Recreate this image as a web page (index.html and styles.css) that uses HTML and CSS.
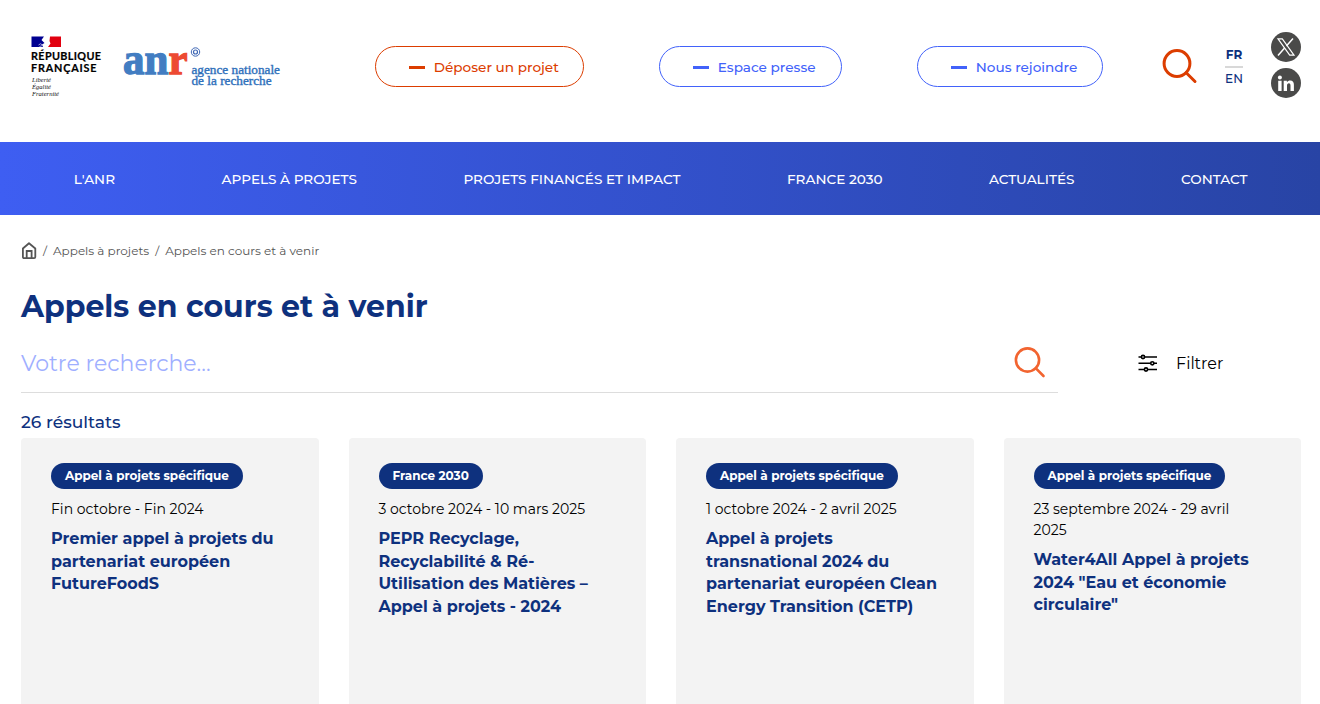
FILE: index.html
```html
<!DOCTYPE html>
<html lang="fr">
<head>
<meta charset="utf-8">
<title>Appels en cours et à venir | ANR</title>
<link rel="stylesheet" href="styles.css">
</head>
<body>
<header class="header">
  <svg class="logo" width="260" height="72" viewBox="0 0 260 72">
    <path fill="#000091" d="M1.500 5.500H14L11.500 9L14.500 12L12 13.500L13 16H1.500Z"/>
    <path fill="#e1000f" d="M20 5.500H31V16H18L20.500 12.500L19.500 10Z"/>
    <path d="M8.500 14q2-2.500 4 0M9.500 15.500l3-1" fill="none" stroke="#b5b8e2" stroke-width=".9"/>
    <g class="logo-rf">
      <text x="1" y="29.200" textLength="70">RÉPUBLIQUE</text>
      <text x="1" y="41" textLength="65.500">FRANÇAISE</text>
    </g>
    <g class="logo-motto">
      <text x="2" y="50.500" textLength="19" lengthAdjust="spacingAndGlyphs">Liberté</text>
      <text x="2" y="57.900" textLength="19" lengthAdjust="spacingAndGlyphs">Égalité</text>
      <text x="2" y="65.300" textLength="27" lengthAdjust="spacingAndGlyphs">Fraternité</text>
    </g>
    <text class="logo-anr" x="93" y="43.200" textLength="64.500" lengthAdjust="spacingAndGlyphs">an<tspan class="logo-r">r</tspan></text>
    <g fill="none" stroke="#4068b5"><circle cx="165.500" cy="21" r="4.200" stroke-width="1"/><circle cx="165.500" cy="21" r="2" stroke-width="1.200"/></g>
    <g class="logo-sub">
      <text x="161.500" y="42.700" textLength="88.500" lengthAdjust="spacingAndGlyphs">agence nationale</text>
      <text x="161.500" y="54" textLength="80" lengthAdjust="spacingAndGlyphs">de la recherche</text>
    </g>
  </svg>
  <div class="actions">
    <a class="pill pill-submit"><i class="dash"></i><span>Déposer un projet</span></a>
    <a class="pill pill-press"><i class="dash"></i><span>Espace presse</span></a>
    <a class="pill pill-join"><i class="dash"></i><span>Nous rejoindre</span></a>
  </div>
  <svg class="search-top" width="36" height="36" viewBox="0 0 36 36" fill="none" stroke="#dc3d00" stroke-width="3"><circle cx="15" cy="14.500" r="12.900"/><path d="M24.200 23.700L33 32.500" stroke-linecap="round"/></svg>
  <div class="langs"><span class="lang-on">FR</span><span class="lang-off">EN</span></div>
  <div class="social">
    <svg width="30" height="30" viewBox="0 0 30 30"><circle cx="15" cy="15" r="15" fill="#4a4a49"/><path d="M7 6.800h4.300L23 23.200h-4.300z" fill="none" stroke="#fff" stroke-width="1.200"/><path d="M22 6.500l-6.600 7.400M13.600 16L7 23.500" stroke="#fff" stroke-width="1.500"/></svg>
    <svg width="30" height="30" viewBox="0 0 30 30"><circle cx="15" cy="15" r="15" fill="#4a4a49"/><g fill="#fff"><circle cx="8.900" cy="9.400" r="2"/><path d="M7.200 12.700h3.400V23H7.200zM12.700 12.700h3.200v1.500c.8-1.200 1.900-1.800 3.300-1.800 2.600 0 3.700 1.600 3.700 4.400V23h-3.400v-5.400c0-1.500-.4-2.400-1.600-2.400-1.300 0-1.900 1-1.900 2.500V23h-3.300z"/></g></svg>
  </div>
</header>
<nav class="nav">
  <a>L'ANR</a><a>APPELS À PROJETS</a><a>PROJETS FINANCÉS ET IMPACT</a><a>FRANCE 2030</a><a>ACTUALITÉS</a><a>CONTACT</a>
</nav>
<main class="main">
  <div class="crumbs">
    <svg width="16" height="18" viewBox="0 0 16 18" fill="none" stroke="#555" stroke-width="1.800"><path d="M1.900 6.500L8 1.300L14.300 6.500V15q0 1.200-1.200 1.200H3.100Q1.900 16.200 1.900 15Z" stroke-linejoin="round"/><path d="M5.700 16.200V9h4.900v7.200"/></svg>
    <span class="slash">/</span><span>Appels à projets</span><span class="slash">/</span><span>Appels en cours et à venir</span>
  </div>
  <h1 class="title">Appels en cours et à venir</h1>
  <div class="search-row">
    <div class="search"><span class="placeholder">Votre recherche...</span>
      <svg width="32" height="32" viewBox="0 0 32 32" fill="none" stroke="#f26430" stroke-width="2.600"><circle cx="13.500" cy="13" r="11.600"/><path d="M21.700 21.200L29.500 29" stroke-linecap="round"/></svg>
    </div>
    <div class="filter">
      <svg width="20" height="18" viewBox="0 0 20 18" fill="#fff" stroke="#000" stroke-width="1.600"><path d="M.5 3h18.500M.5 9.300h18.500M.5 15.500h18.500"/><circle cx="5" cy="3" r="1.600"/><circle cx="14.300" cy="9.300" r="1.600"/><circle cx="8" cy="15.500" r="1.600"/></svg>
      <span>Filtrer</span>
    </div>
  </div>
  <div class="count">26 résultats</div>
  <section class="cards">
    <article class="card"><span class="tag">Appel à projets spécifique</span><p class="date">Fin octobre - Fin 2024</p><h2 class="name">Premier appel à projets du partenariat européen FutureFoodS</h2></article>
    <article class="card"><span class="tag">France 2030</span><p class="date">3 octobre 2024 - 10 mars 2025</p><h2 class="name">PEPR Recyclage,<br>Recyclabilité &amp; Ré-<br>Utilisation des Matières –<br>Appel à projets - 2024</h2></article>
    <article class="card"><span class="tag">Appel à projets spécifique</span><p class="date">1 octobre 2024 - 2 avril 2025</p><h2 class="name">Appel à projets<br>transnational 2024 du<br>partenariat européen Clean<br>Energy Transition (CETP)</h2></article>
    <article class="card"><span class="tag">Appel à projets spécifique</span><p class="date">23 septembre 2024 - 29 avril<br>2025</p><h2 class="name">Water4All Appel à projets<br>2024 "Eau et économie<br>circulaire"</h2></article>
  </section>
</main>
</body>
</html>
```
FILE: styles.css
```css
* { box-sizing: border-box; }
body { margin: 0; height: 704px; overflow: hidden; background: #fff; color: #000; font-family: Montserrat, Inter, "Open Sans", sans-serif; white-space: nowrap; }
.header { height: 142px; display: flex; align-items: flex-start; padding: 31px 19px 0 30px; }
.logo { flex: none; }
.logo-rf { font: 700 10.8px Lato, sans-serif; fill: #000; stroke: #000; stroke-width: .2px; }
.logo-motto { font: italic 6.5px "Liberation Serif", serif; fill: #111; }
.logo-anr { font: bold 45px "Liberation Serif", serif; fill: #427dc2; stroke: #427dc2; stroke-width: 1.3px; }
.logo-r { fill: #ed4a32; stroke: #ed4a32; }
.logo-sub { font: 12px "Liberation Serif", serif; fill: #2f70bb; stroke: #2f70bb; stroke-width: .35px; }
.actions { display: flex; gap: 75px; margin: 15px 0 0 85px; }
.pill { display: flex; align-items: center; height: 41px; padding-left: 33px; gap: 8.8px; border: 1px solid #4262fa; border-radius: 21px; color: #4262fa; font-size: 13.6px; font-weight: 500; }
.pill-submit { width: 209px; color: #dc3d00; border-color: #dc3d00; }
.pill-press { width: 183px; }
.pill-join { width: 186px; }
.dash { width: 16px; height: 3px; margin-top: 2px; background: currentColor; }
.search-top { margin: 18px 0 0 59px; flex: none; }
.langs { width: 18px; margin: 16px 0 0 27px; color: #0e317e; font-size: 12px; line-height: 16px; text-align: center; flex: none; }
.langs span { display: block; }
.lang-on { height: 21px; font-weight: 700; border-bottom: 2px solid #d8d8d8; }
.lang-off { padding-top: 3px; font-weight: 500; }
.social { display: flex; flex-direction: column; gap: 6px; margin: 1px 0 0 auto; }
.nav { height: 73px; display: flex; align-items: center; justify-content: space-between; padding: 1px 72.5px 0 73.8px; background: linear-gradient(90deg, #3e5ef2, #2844a5); color: #fff; font-size: 13.6px; font-weight: 500; }
.main { padding: 0 19px 0 21px; }
.crumbs { display: flex; align-items: center; height: 18px; margin-top: 27px; color: #555; font-size: 12px; line-height: 16px; }
.crumbs span { padding-bottom: 1px; }
.slash { width: 16px; text-align: center; }
.title { margin: 29px 0 0; height: 36px; color: #0e317e; font-size: 30px; line-height: 36px; font-weight: 700; }
.search-row { display: flex; margin-top: 13px; height: 55px; }
.search { display: flex; justify-content: space-between; width: 1037px; height: 55px; padding: 9px 12px 0 0; border-bottom: 1px solid #ddd; }
.placeholder { color: #9fafff; font-size: 22px; line-height: 34px; }
.filter { display: flex; margin-left: 80px; height: 50px; align-items: center; gap: 18px; font-size: 16px; }
.count { margin-top: 18px; height: 27px; line-height: 22px; color: #0e317e; font-size: 17.1px; font-weight: 500; }
.cards { display: grid; grid-template-columns: repeat(4, 1fr); gap: 30px; }
.card { height: 280px; padding: 25px 30px; background: #f3f3f3; border-radius: 4px; }
.tag { display: block; width: fit-content; height: 26px; padding: 0 14px; border-radius: 13px; background: #0e317e; color: #fff; font-size: 12px; line-height: 26px; font-weight: 700; }
.date { margin: 10px 0 8px; font-size: 14px; line-height: 21px; }
.name { margin: 0; color: #0e317e; font-size: 16px; line-height: 22.6px; font-weight: 700; white-space: normal; }
```
